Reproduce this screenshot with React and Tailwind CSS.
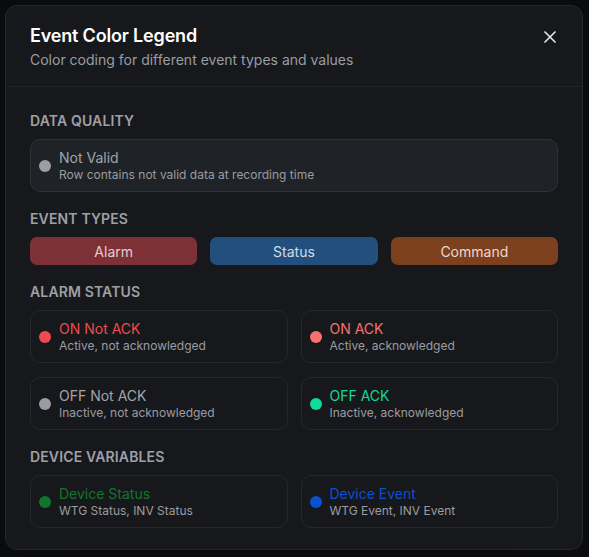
import { X } from "lucide-react";

// legend data
const alarmItems = [
  { label: "ON Not ACK", desc: "Active, not acknowledged", dot: "bg-[#f04a4f]", text: "text-[#f04a4f]" },
  { label: "ON ACK", desc: "Active, acknowledged", dot: "bg-[#f87171]", text: "text-[#f87171]" },
  { label: "OFF Not ACK", desc: "Inactive, not acknowledged", dot: "bg-[#9a9ca3]", text: "text-[#a3a5ab]" },
  { label: "OFF ACK", desc: "Inactive, acknowledged", dot: "bg-[#10d99a]", text: "text-[#10d99a]" },
];

const deviceItems = [
  { label: "Device Status", desc: "WTG Status, INV Status", dot: "bg-[#12762a]", text: "text-[#12762a]" },
  { label: "Device Event", desc: "WTG Event, INV Event", dot: "bg-[#0b4fd2]", text: "text-[#0b4fd2]" },
];

function SectionTitle({ children }) {
  return (
    <h3 className="text-[14px] leading-5 font-semibold uppercase tracking-[0.01em] text-[#9ea0a6] mb-2">
      {children}
    </h3>
  );
}

function LegendCard({ item }) {
  return (
    <div className="flex items-center gap-2 h-[53px] px-2 rounded-[10px] border border-[#25272b]">
      <span className={`w-3 h-3 rounded-full shrink-0 ${item.dot}`}></span>
      <div className="flex flex-col">
        <span className={`text-[14px] leading-[19px] ${item.text}`}>{item.label}</span>
        <span className="text-[12px] leading-4 text-[#9a9ca2]">{item.desc}</span>
      </div>
    </div>
  );
}

export default function App() {
  return (
    <div
      className="min-h-[557px] w-[589px] bg-[#0b0c0f] pt-[5px] pl-[5px]"
      style={{ fontFamily: "Inter, 'Noto Sans', sans-serif" }}
    >
      <div className="w-[578px] h-[545px] rounded-xl border border-[#26272c] bg-[#17181c] shadow-2xl flex flex-col">
        {/* header */}
        <div className="flex items-start justify-between px-6 pt-4 pb-4 border-b border-[#222327]">
          <div>
            <h2 className="text-[18px] leading-7 font-semibold tracking-[-0.01em] text-white">Event Color Legend</h2>
            <p className="text-[14px] leading-5 text-[#9a9ca3]">Color coding for different event types and values</p>
          </div>
          <button className="mt-[5px] -mr-[2px] text-[#e8e8ea]">
            <X size={20} strokeWidth={2} />
          </button>
        </div>

        {/* body */}
        <div className="px-6 pt-6 flex flex-col gap-[17px]">
          <section>
            <SectionTitle>Data Quality</SectionTitle>
            <div className="flex items-center gap-2 h-[53px] px-2 rounded-[10px] border border-[#2e3136] bg-[#1f2226]">
              <span className="w-3 h-3 rounded-full shrink-0 bg-[#9c9ea6]"></span>
              <div className="flex flex-col">
                <span className="text-[14px] leading-[19px] text-[#a2a4aa]">Not Valid</span>
                <span className="text-[12px] leading-4 text-[#9a9ca2]">Row contains not valid data at recording time</span>
              </div>
            </div>
          </section>

          <section>
            <SectionTitle>Event Types</SectionTitle>
            <div className="grid grid-cols-3 gap-[13px]">
              <div className="h-[28px] rounded-[7px] bg-[#7e3037] flex items-center justify-center text-[14px] text-[#e3cfd1]">Alarm</div>
              <div className="h-[28px] rounded-[7px] bg-[#224f7e] flex items-center justify-center text-[14px] text-[#cfdbe8]">Status</div>
              <div className="h-[28px] rounded-[7px] bg-[#7c401f] flex items-center justify-center text-[14px] text-[#ecd9cd]">Command</div>
            </div>
          </section>

          <section>
            <SectionTitle>Alarm Status</SectionTitle>
            <div className="grid grid-cols-2 gap-x-[13px] gap-y-[14px]">
              {alarmItems.map((item) => (
                <LegendCard key={item.label} item={item} />
              ))}
            </div>
          </section>

          <section>
            <SectionTitle>Device Variables</SectionTitle>
            <div className="grid grid-cols-2 gap-[13px]">
              {deviceItems.map((item) => (
                <LegendCard key={item.label} item={item} />
              ))}
            </div>
          </section>
        </div>
      </div>
    </div>
  );
}
